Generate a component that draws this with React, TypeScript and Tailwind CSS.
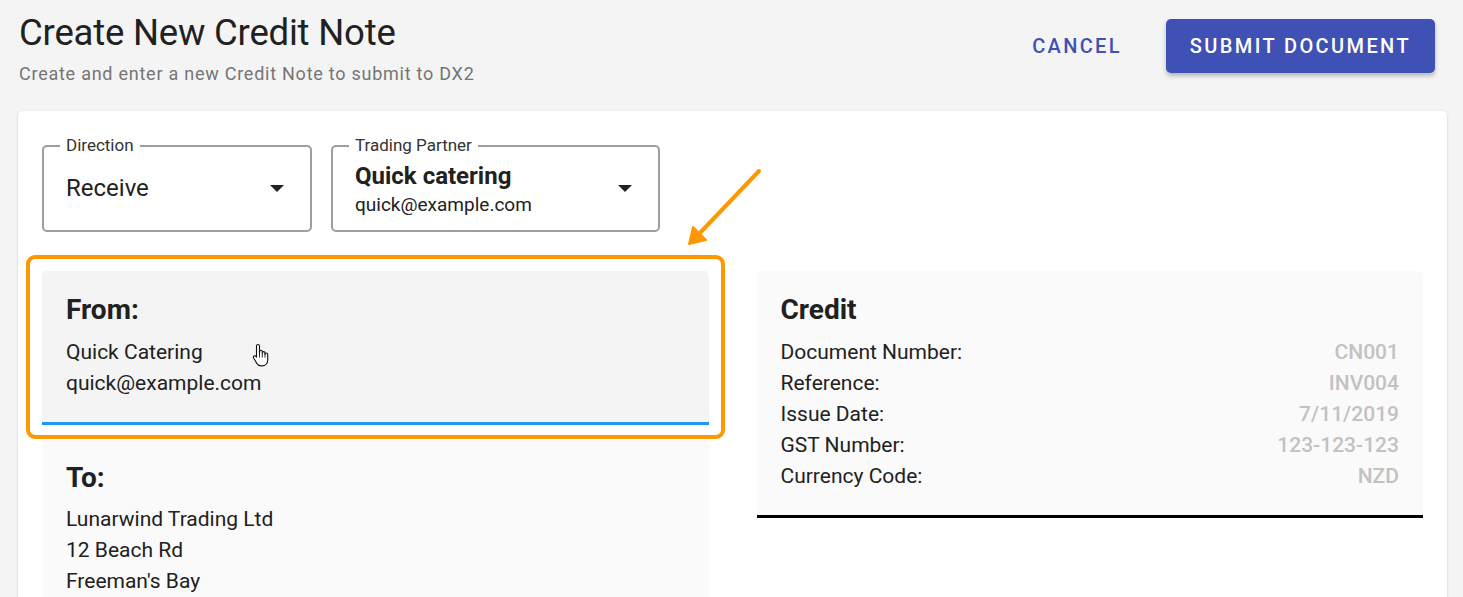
import { ReactNode } from "react";

function Caret() {
  return (
    <svg width="14" height="7" viewBox="0 0 14 7" className="shrink-0">
      <path d="M0 0 L14 0 L7 7 Z" fill="#222" />
    </svg>
  );
}

function OutlinedSelect({ label, width, children }: { label: string; width: string; children: ReactNode }) {
  return (
    <div className={`relative ${width} h-[87px] rounded-[5px] border-2 border-[#9e9e9e]`}>
      <span className="absolute -top-[12px] left-[16px] bg-white px-[6px] text-[17px] leading-[20px] text-[#333]">
        {label}
      </span>
      <div className="flex h-full items-center justify-between pl-[22px] pr-[26px]">
        <div>{children}</div>
        <Caret />
      </div>
    </div>
  );
}

function HandCursor() {
  return (
    <svg width="18" height="24" viewBox="0 0 18 24" className="absolute left-[210px] top-[72px]">
      <path
        d="M6 1.5c.9 0 1.5.7 1.5 1.6V10l.1-1.4c.1-.8.7-1.3 1.4-1.3s1.3.6 1.3 1.4v1.2c.1-.8.7-1.3 1.4-1.3s1.3.6 1.3 1.4v1.2c.1-.7.7-1.2 1.3-1.2.8 0 1.4.6 1.4 1.4v5.5c0 3.4-2.2 6-5.6 6H9.2c-1.9 0-3.1-.8-4.2-2.3L1.6 15c-.5-.7-.3-1.6.4-2 .6-.4 1.4-.3 1.9.3l.6.8V3.1c0-.9.6-1.6 1.5-1.6z"
        fill="#fff"
        stroke="#111"
        strokeWidth="1.1"
        strokeLinejoin="round"
      />
      <path d="M7.5 10v4.5M10.3 10v4.5M13 10.5v4" stroke="#111" strokeWidth="0.9" />
    </svg>
  );
}

const creditRows = [
  ["Document Number:", "CN001"],
  ["Reference:", "INV004"],
  ["Issue Date:", "7/11/2019"],
  ["GST Number:", "123-123-123"],
  ["Currency Code:", "NZD"],
];

export default function App() {
  return (
    <div className="relative min-h-screen overflow-hidden bg-[#f4f4f4] font-['Roboto',sans-serif] text-[#212121]">
      <header className="flex items-start justify-between pl-[19px] pr-[28px] pt-[12px]">
        <div>
          <h1 className="text-[36.5px] leading-[42px] font-normal tracking-[-0.2px] text-[#212121]">
            Create New Credit Note
          </h1>
          <p className="mt-[8px] text-[18px] leading-[24px] tracking-[0.75px] text-[#757575]">
            Create and enter a new Credit Note to submit to DX2
          </p>
        </div>
        <div className="mt-[7px] flex items-center gap-[28px]">
          <button className="h-[54px] px-[16px] text-[20px] font-medium uppercase tracking-[2.3px] text-[#3f51b5]">
            Cancel
          </button>
          <button className="h-[54px] rounded-[5px] bg-[#3f51b5] px-[24px] text-[20px] font-medium uppercase tracking-[2.4px] text-white shadow-[0_3px_4px_rgba(0,0,0,0.25)]">
            Submit Document
          </button>
        </div>
      </header>

      <main className="ml-[18px] mr-[16px] mt-[25px] min-h-[500px] rounded-t-[5px] bg-white px-[24px] pt-[34px] shadow-[0_1px_3px_rgba(0,0,0,0.15)]">
        <div className="flex gap-[19px]">
          <OutlinedSelect label="Direction" width="w-[270px]">
            <span className="text-[24px] leading-[28px] text-[#212121]">Receive</span>
          </OutlinedSelect>
          <OutlinedSelect label="Trading Partner" width="w-[329px]">
            <div>
              <div className="text-[24px] leading-[28px] font-bold text-[#212121]">Quick catering</div>
              <div className="mt-[4px] text-[19px] leading-[22px] text-[#212121]">quick@example.com</div>
            </div>
          </OutlinedSelect>
        </div>

        <div className="mt-[39px] grid grid-cols-2 gap-x-[48px]">
          <div>
            <section className="relative h-[154px] rounded-t-[5px] border-b-[3px] border-[#2196f3] bg-[#f4f4f4] px-[24px] pt-[24px]">
              <h2 className="text-[28px] leading-[30px] font-bold">From:</h2>
              <div className="mt-[12px] text-[21px] leading-[31px]">
                <div>Quick Catering</div>
                <div>quick@example.com</div>
              </div>
              <HandCursor />
            </section>
            <section className="mt-[15px] h-[200px] rounded-t-[5px] bg-[#fafafa] px-[24px] pt-[23px]">
              <h2 className="text-[28px] leading-[30px] font-bold">To:</h2>
              <div className="mt-[11px] text-[21px] leading-[31px]">
                <div>Lunarwind Trading Ltd</div>
                <div>12 Beach Rd</div>
                <div>Freeman's Bay</div>
              </div>
            </section>
          </div>

          <section className="h-[247px] rounded-t-[5px] border-b-[3px] border-black bg-[#fafafa] px-[24px] pt-[24px]">
            <h2 className="text-[28px] leading-[30px] font-bold">Credit</h2>
            <div className="mt-[12px] text-[21px] leading-[31px]">
              {creditRows.map(([label, value]) => (
                <div key={label} className="flex justify-between">
                  <span>{label}</span>
                  <span className="font-medium text-[#c2c2c2]">{value}</span>
                </div>
              ))}
            </div>
          </section>
        </div>
      </main>

      {/* annotation overlay */}
      <div className="pointer-events-none absolute left-[26px] top-[255px] h-[184px] w-[699px] rounded-[9px] border-[4px] border-[#ff9800]" />
      <svg className="pointer-events-none absolute left-0 top-0" width="1463" height="597">
        <line x1="759" y1="171" x2="697" y2="236" stroke="#ff9800" strokeWidth="4" strokeLinecap="round" />
        <path d="M689 244 L693 227 L706 240 Z" fill="#ff9800" stroke="#ff9800" strokeWidth="2" strokeLinejoin="round" />
      </svg>
    </div>
  );
}
